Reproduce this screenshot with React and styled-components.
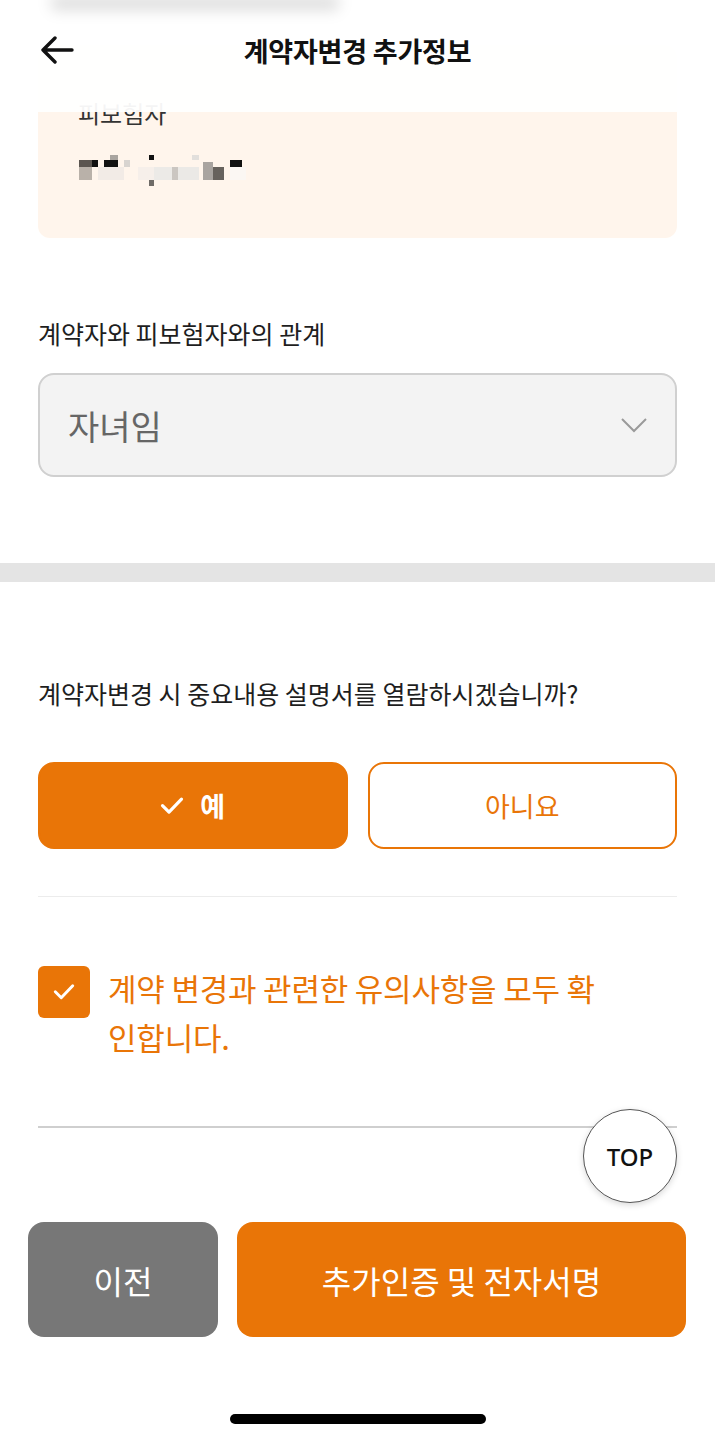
import React from "react";
import styled, { createGlobalStyle } from "styled-components";

const ORANGE = "#e97507";

const GlobalStyle = createGlobalStyle`
  * { box-sizing: border-box; }
  body {
    margin: 0;
    background: #fff;
    font-family: "Noto Sans CJK KR", "Noto Sans", sans-serif;
    color: #1a1a1a;
  }
`;

const Screen = styled.div`
  position: relative;
  width: 715px;
  height: 1440px;
  overflow: hidden;
  background: #fff;
  display: flex;
  flex-direction: column;
`;

const Header = styled.header`
  position: absolute;
  top: 0;
  left: 0;
  right: 0;
  height: 112px;
  background: rgba(255, 255, 255, 0.95);
  z-index: 2;
  display: flex;
  flex-direction: column;
`;

const StatusBlur = styled.div`
  width: 290px;
  height: 16px;
  margin: -5px 0 0 50px;
  border-radius: 8px;
  background: rgba(0, 0, 0, 0.12);
  filter: blur(7px);
`;

const NavRow = styled.div`
  height: 78px;
  display: grid;
  grid-template-columns: 1fr auto 1fr;
  align-items: center;
  padding: 0 40px;
`;

const BackButton = styled.button`
  justify-self: start;
  display: flex;
  padding: 0;
  border: 0;
  background: none;
`;

const Title = styled.h1`
  margin: 0;
  font-size: 27px;
  font-weight: 700;
  letter-spacing: -0.2px;
  color: #111;
`;

const Main = styled.main`
  padding: 45px 38px 0;
  display: flex;
  flex-direction: column;
`;

const InfoCard = styled.section`
  background: #fff5ec;
  border-radius: 12px;
  padding: 53px 40px 50px;
  display: flex;
  flex-direction: column;
`;

const CardLabel = styled.div`
  font-size: 24px;
  line-height: 30px;
  color: #333;
`;

const Mosaic = styled.svg`
  display: block;
  margin-top: 24px;
`;

const FieldLabel = styled.div`
  margin-top: ${(p) => p.$top}px;
  font-size: 25px;
  line-height: 30px;
  color: #1e1e1e;
`;

const SelectBox = styled.div`
  margin-top: 25px;
  height: 104px;
  border: 2px solid #d0d0d0;
  border-radius: 16px;
  background: #f3f3f3;
  display: flex;
  align-items: center;
  justify-content: space-between;
  padding: 0 27px 0 28px;
  font-size: 34px;
  color: #666;
`;

const Band = styled.div`
  margin: 86px -38px 0;
  height: 19px;
  background: #e4e4e4;
`;

const ChoiceRow = styled.div`
  margin-top: 54px;
  display: grid;
  grid-template-columns: 1fr 1fr;
  gap: 20px;
`;

const Choice = styled.button`
  height: 87px;
  border-radius: 16px;
  border: 2px solid ${ORANGE};
  background: ${(p) => (p.$active ? ORANGE : "#fff")};
  color: ${(p) => (p.$active ? "#fff" : ORANGE)};
  font-family: inherit;
  font-size: 27px;
  font-weight: ${(p) => (p.$active ? 700 : 400)};
  display: flex;
  align-items: center;
  justify-content: center;
  gap: 16px;
`;

const Divider = styled.div`
  margin-top: ${(p) => p.$top}px;
  height: ${(p) => p.$h}px;
  background: ${(p) => p.$color};
`;

const CheckRow = styled.label`
  margin-top: 66px;
  display: flex;
  align-items: flex-start;
  gap: 18px;
`;

const CheckBox = styled.span`
  flex: none;
  margin-top: 3px;
  width: 52px;
  height: 52px;
  border-radius: 6px;
  background: ${ORANGE};
  display: flex;
  align-items: center;
  justify-content: center;
`;

const CheckText = styled.span`
  max-width: 500px;
  font-size: 31px;
  line-height: 49px;
  letter-spacing: -0.2px;
  color: ${ORANGE};
`;

const TopButton = styled.button`
  position: absolute;
  top: 1109px;
  right: 38px;
  width: 94px;
  height: 94px;
  border-radius: 50%;
  border: 1.5px solid #555;
  background: #fff;
  box-shadow: 0 2px 6px rgba(0, 0, 0, 0.15);
  font-family: "Noto Sans", sans-serif;
  font-size: 24px;
  font-weight: 500;
  color: #111;
  padding: 0;
`;

const BottomBar = styled.div`
  margin-top: 94px;
  padding: 0 29px 0 28px;
  display: grid;
  grid-template-columns: 190px 1fr;
  gap: 19px;
`;

const ActionButton = styled.button`
  height: 115px;
  border: 0;
  border-radius: 16px;
  background: ${(p) => (p.$primary ? ORANGE : "#777")};
  color: #fff;
  font-family: inherit;
  font-size: 32px;
  font-weight: 400;
`;

const HomeIndicator = styled.div`
  margin: 77px auto 0;
  width: 256px;
  height: 10px;
  border-radius: 5px;
  background: #000;
`;

const mosaicBlocks = [
  [1, 8, 13, 7, "#5b5550"],
  [14, 8, 6, 7, "#111"],
  [1, 15, 13, 13, "#b9b1a9"],
  [20, 15, 26, 13, "#f2ebe6"],
  [26, 8, 14, 7, "#111"],
  [32, 3, 8, 5, "#aaa5a0"],
  [46, 8, 6, 7, "#d8d4d0"],
  [60, 15, 16, 13, "#f6efea"],
  [71, 3, 5, 5, "#111"],
  [76, 15, 18, 13, "#eceae7"],
  [71, 28, 5, 6, "#6f6b67"],
  [94, 15, 6, 13, "#cbc6c1"],
  [100, 15, 21, 13, "#ebe9e6"],
  [114, 3, 7, 5, "#e2dfdc"],
  [125, 10, 10, 18, "#a9a4a0"],
  [135, 15, 11, 13, "#67625d"],
  [152, 8, 12, 7, "#111"],
  [152, 15, 16, 13, "#fbf7f3"],
];

const Check = ({ size = 24 }) => (
  <svg width={size} height={size * 0.8} viewBox="0 0 24 19" fill="none">
    <path
      d="M2.5 9.5 L9 16 L21.5 3"
      stroke="#fff"
      strokeWidth="3.2"
      strokeLinecap="round"
      strokeLinejoin="round"
    />
  </svg>
);

export default function App() {
  return (
    <Screen>
      <GlobalStyle />
      <Header>
        <StatusBlur />
        <NavRow>
          <BackButton aria-label="back">
            <svg width="34" height="28" viewBox="0 0 34 28" fill="none">
              <path
                d="M32 14 H3 M15 2 L3 14 L15 26"
                stroke="#111"
                strokeWidth="3.4"
                strokeLinecap="round"
                strokeLinejoin="round"
              />
            </svg>
          </BackButton>
          <Title>계약자변경 추가정보</Title>
        </NavRow>
      </Header>

      <Main>
        <InfoCard>
          <CardLabel>피보험자</CardLabel>
          <Mosaic width="175" height="36" viewBox="0 0 175 36">
            {mosaicBlocks.map(([x, y, w, h, c], i) => (
              <rect key={i} x={x} y={y} width={w} height={h} fill={c} />
            ))}
          </Mosaic>
        </InfoCard>

        <FieldLabel $top={80}>계약자와 피보험자와의 관계</FieldLabel>
        <SelectBox>
          <span>자녀임</span>
          <svg width="28" height="16" viewBox="0 0 28 16" fill="none">
            <path d="M2 2 L14 14 L26 2" stroke="#9a9a9a" strokeWidth="2" />
          </svg>
        </SelectBox>

        <Band />

        <FieldLabel $top={96}>
          계약자변경 시 중요내용 설명서를 열람하시겠습니까?
        </FieldLabel>
        <ChoiceRow>
          <Choice $active>
            <Check size={24} />
            예
          </Choice>
          <Choice>아니요</Choice>
        </ChoiceRow>

        <Divider $top={47} $h={1} $color="#ececec" />

        <CheckRow>
          <CheckBox>
            <Check size={22} />
          </CheckBox>
          <CheckText>계약 변경과 관련한 유의사항을 모두 확인합니다.</CheckText>
        </CheckRow>

        <Divider $top={65} $h={2} $color="#cfcfcf" />
      </Main>

      <TopButton>TOP</TopButton>

      <BottomBar>
        <ActionButton>이전</ActionButton>
        <ActionButton $primary>추가인증 및 전자서명</ActionButton>
      </BottomBar>

      <HomeIndicator />
    </Screen>
  );
}
